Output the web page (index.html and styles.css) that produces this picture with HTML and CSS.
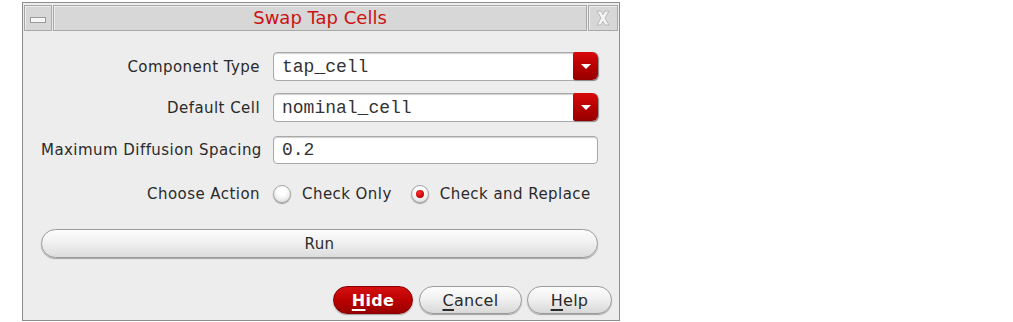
FILE: index.html
```html
<!DOCTYPE html>
<html>
<head>
<meta charset="utf-8">
<link rel="stylesheet" href="styles.css">
</head>
<body>
<div class="dialog">
  <div class="titlebar">
    <div class="tb-btn tb-min"><span class="min-bar"></span></div>
    <div class="tb-title">Swap Tap Cells</div>
    <div class="tb-btn tb-close">
      <svg width="16" height="18" viewBox="0 0 16 18">
        <path d="M2 2 L6 2 L8 5.5 L10 2 L14 2 L10 9 L14 16 L10 16 L8 12.5 L6 16 L2 16 L6 9 Z" fill="#f4f4f4" stroke="#b8b8b8" stroke-width="1"/>
      </svg>
    </div>
  </div>
  <div class="content">
    <div class="row row-1">
      <div class="label">Component Type</div>
      <div class="combo">
        <span class="combo-text">tap_cell</span>
        <span class="combo-btn"><span class="tri"></span></span>
      </div>
    </div>
    <div class="row row-2">
      <div class="label">Default Cell</div>
      <div class="combo">
        <span class="combo-text">nominal_cell</span>
        <span class="combo-btn"><span class="tri"></span></span>
      </div>
    </div>
    <div class="row row-3">
      <div class="label">Maximum Diffusion Spacing</div>
      <div class="field"><span class="combo-text">0.2</span></div>
    </div>
    <div class="row row-4">
      <div class="label label-action">Choose Action</div>
      <div class="radios">
        <span class="radio"></span><span class="radio-label">Check Only</span>
        <span class="radio checked"><span class="dot"></span></span><span class="radio-label">Check and Replace</span>
      </div>
    </div>
    <div class="run">Run</div>
  </div>
  <div class="footer">
    <div class="btn btn-hide"><u>H</u>ide</div>
    <div class="btn btn-cancel"><u>C</u>ancel</div>
    <div class="btn btn-help"><u>H</u>elp</div>
  </div>
</div>
</body>
</html>
```

FILE: styles.css
```css
html, body {
  margin: 0;
  padding: 0;
  background: #ffffff;
}

body {
  font-family: "DejaVu Sans", sans-serif;
}

.dialog {
  box-sizing: border-box;
  margin: 2px 0 0 22px;
  width: 598px;
  height: 319px;
  border: 1px solid #8e8e8e;
  background: #ededed;
  padding: 2px 1px;
  display: flex;
  flex-direction: column;
}

.titlebar {
  display: flex;
  gap: 1px;
  height: 26px;
}

.tb-btn,
.tb-title {
  box-sizing: border-box;
  background: #d7d7d7;
  border: 1px solid #a8a8a8;
  box-shadow: inset 1px 1px 0 #ececec;
}

.tb-min {
  width: 28px;
  display: flex;
  align-items: center;
  justify-content: center;
}

.min-bar {
  display: block;
  width: 14px;
  height: 4px;
  margin-top: 3px;
  background: #f6f6f6;
  border: 1px solid #9a9a9a;
}

.tb-title {
  flex: 1;
  display: flex;
  align-items: center;
  justify-content: center;
  color: #cc1111;
  font-size: 18px;
  padding-bottom: 1px;
}

.tb-close {
  width: 30px;
  display: flex;
  align-items: center;
  justify-content: center;
}

.content {
  padding: 21px 20px 0 17px;
  display: flex;
  flex-direction: column;
}

.row {
  display: flex;
  align-items: center;
  gap: 13px;
}

.row-1 { margin-bottom: 12px; }
.row-2 { margin-bottom: 14px; }
.row-3 { margin-bottom: 15px; }
.row-4 { margin-bottom: 21px; height: 29px; }

.label {
  width: 219px;
  flex: none;
  text-align: right;
  font-size: 15px;
  letter-spacing: 0.45px;
  color: #2a2a2a;
  white-space: nowrap;
}

.label-action {
  margin-right: -3px;
  padding-right: 3px;
}

.combo,
.field {
  box-sizing: border-box;
  position: relative;
  width: 325px;
  height: 29px;
  background: #ffffff;
  border: 1px solid #a9a9a9;
  border-radius: 4px;
  box-shadow: inset 0 1px 1px #d0d0d0;
  display: flex;
  align-items: center;
  padding-left: 8px;
}

.field {
  height: 28px;
}

.combo-text {
  font-family: "Liberation Mono", "DejaVu Sans Mono", monospace;
  font-size: 18px;
  color: #333333;
}

.combo-btn {
  position: absolute;
  right: -1px;
  top: -1px;
  width: 25px;
  height: 28px;
  border-radius: 2px 6px 6px 2px;
  background: linear-gradient(#d80a0a, #b00000 60%, #960000);
  box-shadow: 1px 1px 1px #8a8a8a;
  display: flex;
  align-items: center;
  justify-content: center;
}

.tri {
  width: 0;
  height: 0;
  border-left: 5px solid transparent;
  border-right: 5px solid transparent;
  border-top: 5px solid #ffffff;
  margin-top: 1px;
}

.radios {
  display: flex;
  align-items: center;
}

.radio {
  box-sizing: border-box;
  width: 18px;
  height: 18px;
  border-radius: 50%;
  border: 1px solid #a6a6a6;
  background: radial-gradient(circle at 50% 35%, #ffffff 30%, #dcdcdc 90%);
  box-shadow: 0 1px 1px #9a9a9a;
  display: flex;
  align-items: center;
  justify-content: center;
}

.radio.checked {
  margin-left: 19px;
}

.dot {
  width: 8px;
  height: 8px;
  border-radius: 50%;
  background: radial-gradient(circle at 40% 35%, #ff3030, #c00000 70%);
}

.radio-label {
  font-size: 15px;
  letter-spacing: 0.45px;
  color: #2a2a2a;
  margin-left: 11px;
}

.run {
  box-sizing: border-box;
  height: 29px;
  border: 1px solid #9c9c9c;
  border-radius: 15px;
  background: linear-gradient(#fdfdfd, #f1f1f1 45%, #dcdcdc);
  box-shadow: 0 1px 1px #a0a0a0;
  display: flex;
  align-items: center;
  justify-content: center;
  font-size: 15px;
  letter-spacing: 0.45px;
  color: #2a2a2a;
}

.footer {
  margin-top: auto;
  display: flex;
  justify-content: flex-end;
  padding: 0 6px 4px 0;
}

.btn {
  box-sizing: border-box;
  height: 28px;
  border-radius: 14px;
  display: flex;
  align-items: center;
  justify-content: center;
  font-size: 16px;
  letter-spacing: 0.3px;
  color: #2a2a2a;
  border: 1px solid #9c9c9c;
  background: linear-gradient(#fdfdfd, #f1f1f1 45%, #d8d8d8);
  box-shadow: 0 1px 1px #a0a0a0;
}

.btn u {
  text-decoration-thickness: 2px;
  text-underline-offset: 3px;
}

.btn-hide {
  width: 80px;
  margin-right: 6px;
  color: #ffffff;
  font-weight: bold;
  border-color: #8a0000;
  background: linear-gradient(#d61010, #bb0000 50%, #990000);
}

.btn-cancel {
  width: 103px;
  margin-right: 5px;
}

.btn-help {
  width: 85px;
}
```
